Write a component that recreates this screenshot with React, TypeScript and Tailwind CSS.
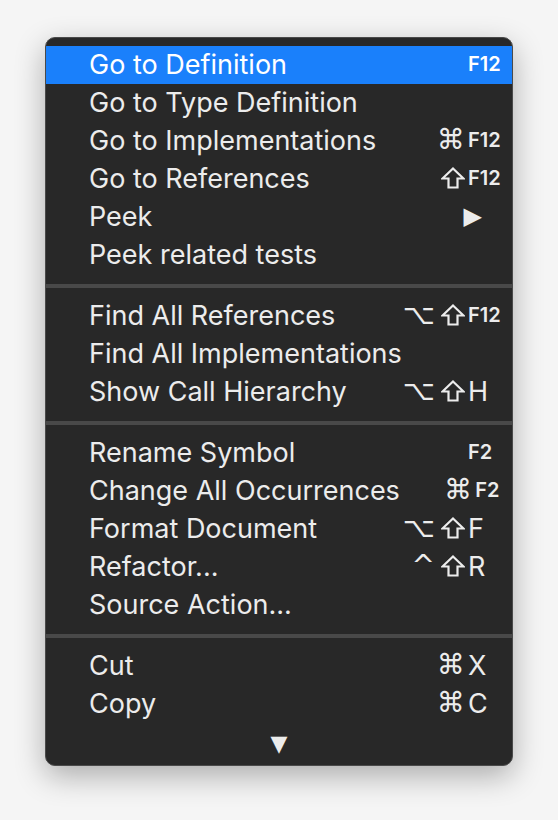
import React from "react"

type Item = {
  label: string
  mods?: string
  keyName?: string
  fn?: boolean
  submenu?: boolean
  active?: boolean
}

const groups: Item[][] = [
  [
    { label: "Go to Definition", keyName: "F12", fn: true, active: true },
    { label: "Go to Type Definition" },
    { label: "Go to Implementations", mods: "⌘", keyName: "F12", fn: true },
    { label: "Go to References", mods: "⇧", keyName: "F12", fn: true },
    { label: "Peek", submenu: true },
    { label: "Peek related tests" },
  ],
  [
    { label: "Find All References", mods: "⌥⇧", keyName: "F12", fn: true },
    { label: "Find All Implementations" },
    { label: "Show Call Hierarchy", mods: "⌥⇧", keyName: "H" },
  ],
  [
    { label: "Rename Symbol", keyName: "F2", fn: true },
    { label: "Change All Occurrences", mods: "⌘", keyName: "F2", fn: true },
    { label: "Format Document", mods: "⌥⇧", keyName: "F" },
    { label: "Refactor...", mods: "^⇧", keyName: "R" },
    { label: "Source Action..." },
  ],
  [
    { label: "Cut", mods: "⌘", keyName: "X" },
    { label: "Copy", mods: "⌘", keyName: "C" },
  ],
]

function ShiftIcon() {
  return (
    <svg width="24" height="22" viewBox="0 0 24 22" className="ml-[6px]">
      <path
        d="M12 1.5 L22.5 11.5 L16.5 11.5 L16.5 20.5 L7.5 20.5 L7.5 11.5 L1.5 11.5 Z"
        fill="none"
        stroke="currentColor"
        strokeWidth="2.2"
        strokeLinejoin="miter"
      />
    </svg>
  )
}

function Mods({ mods }: { mods: string }) {
  return (
    <span className="w-[90px] pr-[3px] flex items-center justify-end">
      {Array.from(mods).map((m, i) =>
        m === "⇧" ? (
          <ShiftIcon key={i} />
        ) : (
          <span key={i} className="text-[28px] leading-none font-['DejaVu_Sans',sans-serif]">
            {m}
          </span>
        )
      )}
    </span>
  )
}

function Row({ item }: { item: Item }) {
  return (
    <div
      className={
        "flex items-center h-[38px] pl-[43px] pb-[2px] " +
        (item.active ? "bg-[#1a80fb] text-white" : "text-[#ececec]")
      }
    >
      <span className="flex-1 whitespace-nowrap text-[27px] leading-none">{item.label}</span>
      {item.submenu && (
        <span className="pr-[30px] text-[24px] leading-none font-['DejaVu_Sans',sans-serif]">▶</span>
      )}
      {item.keyName && (
        <>
          {item.mods ? <Mods mods={item.mods} /> : <span className="w-[90px]" />}
          <span
            className={
              "w-[44px] leading-none " +
              (item.fn ? "text-[20px] font-semibold" : "text-[27px]")
            }
          >
            {item.keyName}
          </span>
        </>
      )}
    </div>
  )
}

export default function App() {
  return (
    <div className="min-h-[820px] w-[558px] bg-[#f5f5f5] pt-[37px] pl-[45px] font-['Inter',sans-serif]">
      <div className="w-[468px] h-[729px] rounded-[10px] border border-[#4a4a4a] bg-[#282828] pt-[8px] overflow-hidden shadow-[0_10px_30px_rgba(0,0,0,0.3)]">
        {groups.map((g, gi) => (
          <div key={gi}>
            {gi > 0 && (
              <div className="pt-[10px] pb-[9px]">
                <div className="h-[4px] bg-[#494949]" />
              </div>
            )}
            {g.map((item) => (
              <Row key={item.label} item={item} />
            ))}
          </div>
        ))}
        <div className="flex justify-center pt-[10px] text-[#ececec] text-[22px] leading-none font-['DejaVu_Sans',sans-serif]">
          ▼
        </div>
      </div>
    </div>
  )
}
